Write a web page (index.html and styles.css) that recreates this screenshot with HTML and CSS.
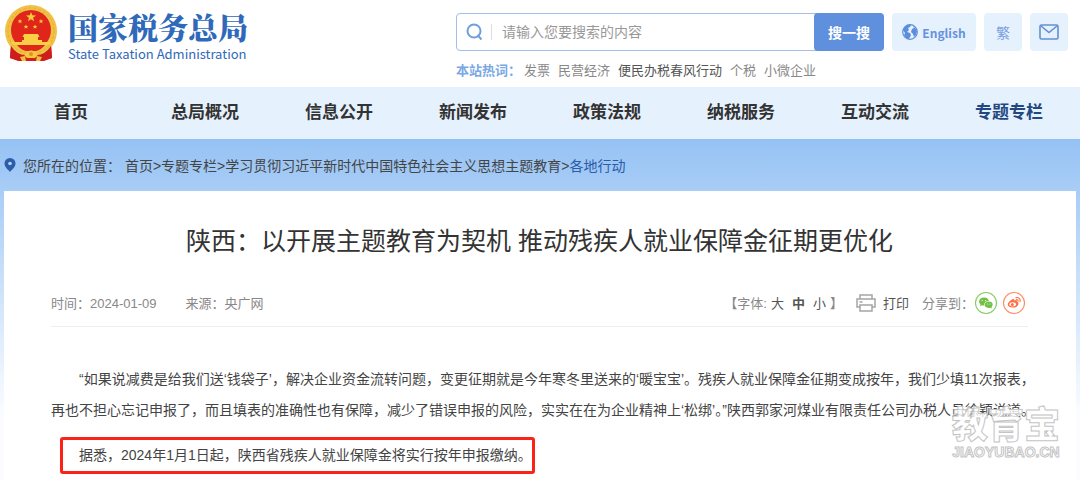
FILE: index.html
```html
<!DOCTYPE html>
<html lang="zh-CN">
<head>
  <meta charset="UTF-8">
  <meta name="viewport" content="width=device-width, initial-scale=1.0">
  <title>国家税务总局</title>
  <link rel="stylesheet" href="styles.css">
</head>
<body>

<!-- 页头 -->
<header class="header">
  <a class="logo" href="#">
    <svg class="emblem" viewBox="0 0 54 58" aria-hidden="true">
      <path d="M7 40 L47 40 L48 54 L40 57 L14 57 L6 54Z" fill="#d3201c"/>
      <circle cx="27" cy="27" r="26" fill="#f0c145"/>
      <circle cx="27" cy="27" r="23" fill="none" stroke="#e6ad33" stroke-width="1" stroke-dasharray="3 2"/>
      <circle cx="27" cy="26" r="20" fill="#e0251b"/>
      <path d="M27 8l1.300 3.300 3.700.2-2.900 2.200 1 3.500-3.100-2-3.100 2 1-3.500-2.900-2.200 3.700-.2z" fill="#f6c83e"/>
      <path d="M16 15l.7 1.500 1.600.1-1.200 1 .4 1.600-1.500-.9-1.500.9.4-1.600-1.200-1 1.600-.1zM37 15l.7 1.500 1.600.1-1.200 1 .4 1.600-1.500-.9-1.500.9.4-1.600-1.200-1 1.600-.1zM22 20.500l.7 1.500 1.600.1-1.200 1 .4 1.600-1.500-.9-1.500.9.4-1.600-1.200-1 1.600-.1zM31 20.500l.7 1.500 1.600.1-1.200 1 .4 1.600-1.500-.9-1.500.9.4-1.600-1.200-1 1.600-.1z" fill="#f6c83e"/>
      <path d="M20 30h14l1.500 3H34v3h4v2h9l-2 3H9l-2-3h11v-2h2v-3h-1.500z" fill="#f8cf45"/>
      <path d="M13 41h28q-4 5-9 6H22q-5-1-9-6z" fill="#e0251b"/>
      <path d="M20 51q7-9 14 0l-3 3h-8z" fill="#f6c83e"/>
      <circle cx="27" cy="50" r="2" fill="#d9942a"/>
      <path d="M7 42q6 9 14 9l-4 6-11-3zM47 42q-6 9-14 9l4 6 11-3z" fill="#cf1d1c"/>
      <path d="M16 53l5-1 1 5h-4zM38 53l-5-1-1 5h4z" fill="#f0bd3c"/>
    </svg>
    <span class="logo-text">
      <span class="logo-name">国家税务总局</span>
      <span class="logo-en">State Taxation Administration</span>
    </span>
  </a>

  <div class="tools">
    <div class="tools-row">
      <form class="search" action="#">
        <label class="search-label" for="keyword" aria-label="搜索">
          <svg width="18" height="18" viewBox="0 0 18 18" fill="none" stroke="#6f9fde" stroke-width="2" aria-hidden="true">
            <circle cx="8" cy="8" r="6.500"/>
            <path d="M11.500 12l4 4.500"/>
          </svg>
        </label>
        <input type="text" id="keyword" name="keyword" placeholder="请输入您要搜索的内容">
        <button type="submit">搜一搜</button>
      </form>
      <a class="tool tool-en" href="#">
        <svg width="16" height="16" viewBox="0 0 16 16" aria-hidden="true">
          <circle cx="8" cy="8" r="7.300" fill="#e6f1fe" stroke="#5c8edb" stroke-width="1.200"/>
          <path d="M2 4q3-4 7-3L8 3 6 4l1 2-2 2 3 1 1 2-2 4q-3 0-5-4l1-2-2-3z" fill="#5c8edb"/>
          <path d="M11 2q3 2 4 5l-1 4-2 2-1-3-2-2 1-3 2-1z" fill="#5c8edb"/>
        </svg>
        English
      </a>
      <a class="tool" href="#">繁</a>
      <a class="tool" href="#" aria-label="邮箱">
        <svg width="20" height="16" viewBox="0 0 20 16" fill="none" stroke="#6390cf" stroke-width="1.600" aria-hidden="true">
          <rect x="1" y="1" width="18" height="14" rx="1.500"/>
          <path d="M2 2l8 6.500L18 2"/>
        </svg>
      </a>
    </div>
    <div class="hot">
      <strong>本站热词：</strong>
      <a href="#">发票</a>
      <a href="#">民营经济</a>
      <a class="hot-dark" href="#">便民办税春风行动</a>
      <a href="#">个税</a>
      <a href="#">小微企业</a>
    </div>
  </div>
</header>

<!-- 导航 -->
<nav class="nav">
  <a href="#">首页</a>
  <a href="#">总局概况</a>
  <a href="#">信息公开</a>
  <a href="#">新闻发布</a>
  <a href="#">政策法规</a>
  <a href="#">纳税服务</a>
  <a href="#">互动交流</a>
  <a class="active" href="#">专题专栏</a>
</nav>

<main class="main">
  <div class="crumbs">
    <svg width="12" height="14" viewBox="0 0 12 14" aria-hidden="true">
      <path d="M6 0a5.500 5.500 0 0 1 5.500 5.500C11.500 9 8 11.500 6 14 4 11.500.5 9 .5 5.500A5.500 5.500 0 0 1 6 0z" fill="#2c5dab"/>
      <circle cx="6" cy="5.500" r="1.800" fill="#b9d6f7"/>
    </svg>
    <div class="crumbs-path">您所在的位置： <a href="#">首页</a>&gt;<a href="#">专题专栏</a>&gt;<a href="#">学习贯彻习近平新时代中国特色社会主义思想主题教育</a>&gt;<a class="current" href="#">各地行动</a></div>
  </div>

  <!-- 正文 -->
  <article class="article">
    <h1>陕西：以开展主题教育为契机 推动残疾人就业保障金征期更优化</h1>

    <div class="meta">
      <span>时间：2024-01-09</span>
      <span class="source">来源：央广网</span>
      <div class="font-size">
        <span>【字体:</span>
        <div class="sizes">
          <button type="button">大</button>
          <button type="button" class="selected">中</button>
          <button type="button">小</button>
        </div>
        <span>】</span>
      </div>
      <button type="button" class="print">
        <svg width="20" height="18" viewBox="0 0 20 18" fill="none" stroke="#a5a5a5" stroke-width="1.500" aria-hidden="true">
          <path d="M4 5V1h12v4M4 13H1V5h18v8h-3M3.500 8h3"/>
          <path d="M4 11h12v6H4z"/>
        </svg>
        打印
      </button>
      <div class="share">
        <span>分享到：</span>
        <a href="#" aria-label="微信">
          <svg width="24" height="24" viewBox="0 0 24 24" aria-hidden="true">
            <circle cx="12" cy="12" r="10.500" fill="#fff" stroke="#86cd62" stroke-width="1.100"/>
            <path d="M10 6.500c3 0 4.700 1.700 4.800 3.500-3 0-5 1.800-4.600 4.500-.8 0-1.500-.1-2.200-.3L6 15.300l.6-1.900C3.600 11 5.300 6.500 10 6.500z" fill="#71c046"/>
            <path d="M14.800 10.600c4 0 5 3.700 2.700 5.400l.4 1.500-1.600-.8c-3.300.8-5.700-.8-5.700-2.900 0-1.800 1.800-3.200 4.200-3.200z" fill="#71c046"/>
            <circle cx="8.200" cy="9.500" r=".6" fill="#fff"/><circle cx="11.500" cy="9.500" r=".6" fill="#fff"/>
            <circle cx="13.300" cy="13" r=".5" fill="#fff"/><circle cx="16" cy="13" r=".5" fill="#fff"/>
          </svg>
        </a>
        <a href="#" aria-label="微博">
          <svg width="24" height="24" viewBox="0 0 24 24" aria-hidden="true">
            <circle cx="12" cy="12" r="10.500" fill="#fff" stroke="#ff8b63" stroke-width="1.100"/>
            <path d="M10.500 8.200c1.200-.5 2 .1 1.700 1.400 1.800-.7 3.200-.3 2.800 1.200 3 1.200 1.200 5.700-4.200 5.700-6.800 0-6.600-5-.3-8.300z" fill="#ff6f43"/>
            <ellipse cx="10.700" cy="13.200" rx="3.300" ry="2" fill="#fff"/>
            <circle cx="10.300" cy="13.400" r="1.500" fill="#ff6f43"/>
            <path d="M14 6.600c2.800-.6 4.700 1.500 4 4M14.300 8.600c1.300-.2 2 .6 1.700 1.700" fill="none" stroke="#ff6f43" stroke-width="1.100" stroke-linecap="round"/>
          </svg>
        </a>
      </div>
    </div>

    <div class="content">
      <p>“如果说减费是给我们送‘钱袋子’，解决企业资金流转问题，变更征期就是今年寒冬里送来的‘暖宝宝’。残疾人就业保障金征期变成按年，我们少填11次报表，<br>再也不担心忘记申报了，而且填表的准确性也有保障，减少了错误申报的风险，实实在在为企业精神上‘松绑’。”陕西郭家河煤业有限责任公司办税人员徐颖说道。</p>
      <p class="marked">据悉，2024年1月1日起，陕西省残疾人就业保障金将实行按年申报缴纳。</p>
    </div>

    <div class="watermark">
      <span class="watermark-name">教育宝</span>
      <span class="watermark-url">JIAOYUBAO.CN</span>
    </div>
  </article>
</main>

</body>
</html>
```
FILE: styles.css
```css
* {
  box-sizing: border-box;
}

body {
  margin: 0;
  min-height: 100vh;
  display: flex;
  flex-direction: column;
  overflow-x: hidden;
  font-family: "Liberation Sans", "Noto Sans CJK SC", sans-serif;
  font-size: 14px;
  color: #444;
  background-color: #fff;
}

a {
  color: inherit;
  text-decoration: none;
}

button {
  padding: 0;
  border: none;
  background: none;
  font: inherit;
  color: inherit;
  cursor: pointer;
}

svg {
  display: block;
  flex-shrink: 0;
}

/* 页头 */
.header {
  display: flex;
  justify-content: space-between;
  align-items: flex-start;
  height: 87px;
  padding: 0 12px 0 4px;
}

.logo {
  display: flex;
  gap: 10px;
  padding-top: 4px;
  color: #2f69b9;
}

.emblem {
  width: 54px;
  height: 58px;
}

.logo-text {
  display: flex;
  flex-direction: column;
  padding-top: 3px;
  white-space: nowrap;
}

.logo-name {
  font-family: "Noto Serif CJK SC", "Noto Sans CJK SC", serif;
  font-size: 30px;
  line-height: 38px;
  font-weight: 900;
}

.logo-en {
  font-family: "Noto Sans CJK SC", sans-serif;
  font-size: 13px;
  line-height: 18px;
  font-weight: 400;
}

.tools {
  width: 612px;
  padding-top: 13px;
}

.tools-row {
  display: flex;
  gap: 8px;
}

.search {
  flex: 1;
  display: flex;
  height: 38px;
  border: 1px solid #a3bfe8;
  border-radius: 4px;
}

.search-label {
  display: flex;
  align-items: center;
  padding-left: 9px;
}

.search-label::after {
  content: "";
  height: 16px;
  margin-left: 7px;
  border-left: 1px solid #ddd;
}

.search input {
  flex: 1;
  min-width: 0;
  padding: 0 10px;
  border: none;
  outline: none;
  background: none;
  font: inherit;
}

.search input::placeholder {
  color: #999;
}

.search button {
  width: 70px;
  margin: -1px;
  border-radius: 4px;
  color: #fff;
  font-weight: 700;
  background-color: #5f90de;
}

.tool {
  display: flex;
  align-items: center;
  justify-content: center;
  gap: 4px;
  width: 38px;
  height: 38px;
  border-radius: 4px;
  color: #7b9fe0;
  background-color: #e6f1fe;
}

.tool-en {
  width: 84px;
  font-family: "Noto Sans CJK SC", sans-serif;
  font-size: 12px;
  font-weight: 700;
  color: #6592dc;
}

.hot {
  display: flex;
  gap: 8px;
  padding-top: 10px;
  font-size: 13px;
  line-height: 20px;
  color: #888;
  white-space: nowrap;
}

.hot strong {
  margin-right: -5px;
  color: #79a8e3;
}

.hot-dark {
  color: #555;
}

/* 导航 */
.nav {
  display: grid;
  grid-template-columns: repeat(8, 1fr);
  padding: 0 4px;
  background-color: #e6f1fe;
  font-size: 17px;
  font-weight: 700;
  line-height: 52px;
  text-align: center;
  color: #333;
}

.nav .active {
  color: #23477f;
}

/* 内容区 */
.main {
  flex: 1;
  display: flex;
  flex-direction: column;
  padding: 0 4px;
  background: linear-gradient(#95c2f4, #fafcff 80%);
}

.crumbs {
  display: flex;
  align-items: center;
  gap: 7px;
  height: 52px;
}

.crumbs-path {
  white-space: nowrap;
}

.crumbs .current {
  color: #2a5ca8;
}

.article {
  position: relative;
  flex: 1;
  padding: 30px 48px 0 47px;
  background-color: #fff;
}

h1 {
  margin: 0;
  font-size: 25px;
  line-height: 40px;
  font-weight: 400;
  text-align: center;
  color: #333;
}

.meta {
  display: flex;
  align-items: center;
  height: 66px;
  padding: 18px 2px 0 0;
  margin-bottom: 37px;
  border-bottom: 1px solid #eee;
  font-size: 13px;
  color: #888;
  white-space: nowrap;
}

.source {
  margin-left: 29px;
}

.font-size {
  display: flex;
  align-items: center;
  gap: 4px;
  margin-left: auto;
}

.sizes {
  display: flex;
  gap: 8px;
}

.sizes button,
.print {
  color: #555;
}

.sizes .selected {
  font-weight: 700;
}

.print {
  display: flex;
  align-items: center;
  gap: 7px;
  margin: 0 13px;
}

.share {
  display: flex;
  align-items: center;
  gap: 4px;
}

.share span {
  margin-right: -4px;
}

/* 正文 */
.content {
  line-height: 31px;
  white-space: nowrap;
}

.content p {
  margin: 0;
  text-indent: 28px;
}

.content .marked {
  width: fit-content;
  margin: 11px 0 0 9px;
  border: 3px solid #fb2318;
  border-radius: 3px;
  text-indent: 16px;
}

/* 水印 */
.watermark {
  position: absolute;
  right: 16px;
  bottom: 20px;
  display: flex;
  flex-direction: column;
  align-items: center;
  color: rgba(255, 255, 255, 0.8);
  -webkit-text-stroke: 1px #c4c4c4;
  pointer-events: none;
}

.watermark-name {
  font-size: 36px;
  line-height: 36px;
  font-weight: 900;
}

.watermark-url {
  font-size: 14px;
  line-height: 16px;
  font-weight: 700;
}
```
